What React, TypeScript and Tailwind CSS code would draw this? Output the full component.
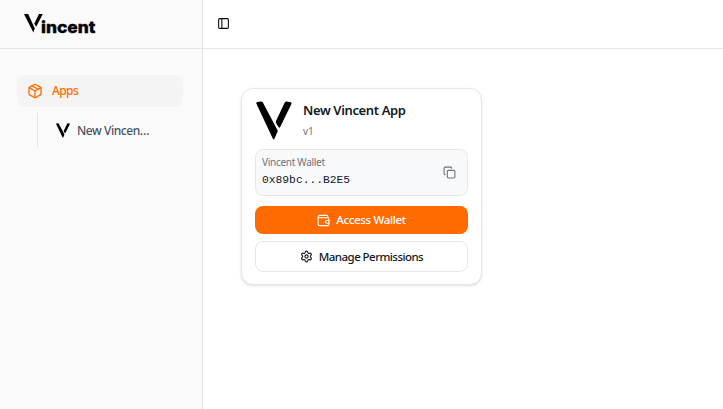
import { Copy, Package, PanelLeft, Settings } from 'lucide-react';

function VMark({ className }: { className?: string }) {
  return (
    <svg viewBox="0 0 36 39" className={className} fill="#000" preserveAspectRatio="none">
      <path d="M.3 2.6Q0 1.5 1.2 1.1L5 .5Q6.2 .3 6.9 1.6L21.5 29.2Q21.9 30 21.5 30.8L18.2 38.3Q17.6 38.8 17 38Z" />
      <path d="M28.6 1.8Q29.4 .4 30.8.6L34.9 1.3Q36 1.8 35.4 3L24.2 26.1Q23.4 27.4 22.5 26.1L20 22Q19.6 21 20 20.1Z" />
    </svg>
  );
}

function Brand() {
  return (
    <div className="flex h-5 w-[72px] items-start" aria-label="Vincent">
      <svg viewBox="0 0 19 19" className="h-[19px] w-[19px] shrink-0" fill="#000">
        <path d="M0 0H4.2L10.7 14.2L9.4 18.6Z" />
        <path d="M15 0H18.8L12.2 12.8L10.2 9.7Z" />
      </svg>
      <svg viewBox="0 0 54 20" className="-ml-px h-5 w-[54px] shrink-0 overflow-visible">
        <text x="-1" y="18.7" textLength="54.5" lengthAdjust="spacingAndGlyphs" fontFamily="Inter, sans-serif" fontWeight="800" fontSize="16.5" fill="#000" stroke="#000" strokeWidth="0.35">incent</text>
      </svg>
    </div>
  );
}

function Sidebar() {
  return (
    <aside className="flex w-[203px] shrink-0 flex-col border-r border-[#e5e5e5] bg-[#fafafa]">
      <div className="flex h-[49px] items-start border-b border-[#e5e5e5] pt-3.5 pl-6">
        <Brand />
      </div>
      <nav className="pt-[26px] pl-[17px]">
        <div className="flex h-8 w-[166px] items-center rounded-lg bg-[#f4f4f4] pl-2.5 text-[#ff6b00]">
          <Package className="h-4 w-4" strokeWidth={2} />
          <span className="ml-[9px] text-[12px] font-medium tracking-[-0.6px]">Apps</span>
        </div>
        <div className="mt-1.5 ml-5 flex h-[35px] items-center border-l border-[#e5e5e5] pl-[18px]">
          <VMark className="h-[15px] w-[14px]" />
          <span className="ml-[7px] text-[12px] font-medium tracking-[-0.45px] text-[#4b5563]">New Vincen…</span>
        </div>
      </nav>
    </aside>
  );
}

/* Outlined wallet with a rounded clasp on the right edge. */
function WalletIcon() {
  return (
    <svg viewBox="0 0 24 24" className="h-[13px] w-[13px]" fill="none" stroke="currentColor" strokeWidth="2" strokeLinecap="round" strokeLinejoin="round">
      <path d="M20 7V5a2.5 2.5 0 0 0-2.5-2.5H4.5a2.25 2.25 0 0 0 0 4.5H19.5A2.5 2.5 0 0 1 22 9.5V19a2.5 2.5 0 0 1-2.5 2.5H5A3 3 0 0 1 2 18.5V5" />
      <path d="M22 12H18a2.5 2.5 0 0 0 0 5H22" />
    </svg>
  );
}

function AppCard() {
  return (
    <section className="flex h-[197px] w-[241px] flex-col rounded-xl border border-[#e5e7eb] bg-white px-[13px] pt-3 shadow-sm">
      <div className="flex h-12">
        <VMark className="ml-px h-[39px] w-9" />
        <div className="-mt-px ml-[11px] flex flex-col">
          <h2 className="h-5 text-[13px] leading-5 font-semibold tracking-[-0.37px] text-[#111827]">New Vincent App</h2>
          <span className="mt-[3px] text-[10px] leading-4 text-[#6b7280]">v1</span>
        </div>
      </div>
      <div className="flex h-[47px] items-center justify-between rounded-lg border border-[#e5e7eb] bg-[#f8f9fb] pr-[11px] pl-1.5">
        <div className="-mt-[3px] flex flex-col">
          <span className="text-[10px] leading-4 tracking-[-0.28px] text-[#6b7280]">Vincent Wallet</span>
          <span className="mt-0.5 font-['Liberation_Mono',monospace] text-[11.3px] leading-4 text-[#111827]">0x89bc...B2E5</span>
        </div>
        <Copy className="h-[13px] w-[13px] text-[#6b7280]" strokeWidth={2} />
      </div>
      <button className="mt-2.5 flex h-7 shrink-0 items-center justify-center gap-1.5 rounded-lg bg-[#ff6b00] text-[11.5px] font-medium tracking-[-0.35px] text-white">
        <WalletIcon />
        <span>Access Wallet</span>
      </button>
      <button className="mt-[7px] flex h-[31px] shrink-0 items-center justify-center gap-1.5 rounded-lg border border-[#e5e7eb] bg-white text-[11.5px] font-medium tracking-[-0.55px] text-[#111827]">
        <Settings className="h-[13px] w-[13px]" strokeWidth={2} />
        <span>Manage Permissions</span>
      </button>
    </section>
  );
}

export default function App() {
  return (
    <div className="flex h-screen w-full overflow-hidden bg-white font-['Noto_Sans',sans-serif]">
      <Sidebar />
      <main className="flex grow flex-col">
        <header className="flex h-[49px] items-start border-b border-[#e5e5e5] pt-[17px] pl-3.5">
          <PanelLeft className="h-[13px] w-[13px] text-[#0a0a0a]" strokeWidth={2} />
        </header>
        <div className="pt-[39px] pl-[38px]">
          <AppCard />
        </div>
      </main>
    </div>
  );
}
